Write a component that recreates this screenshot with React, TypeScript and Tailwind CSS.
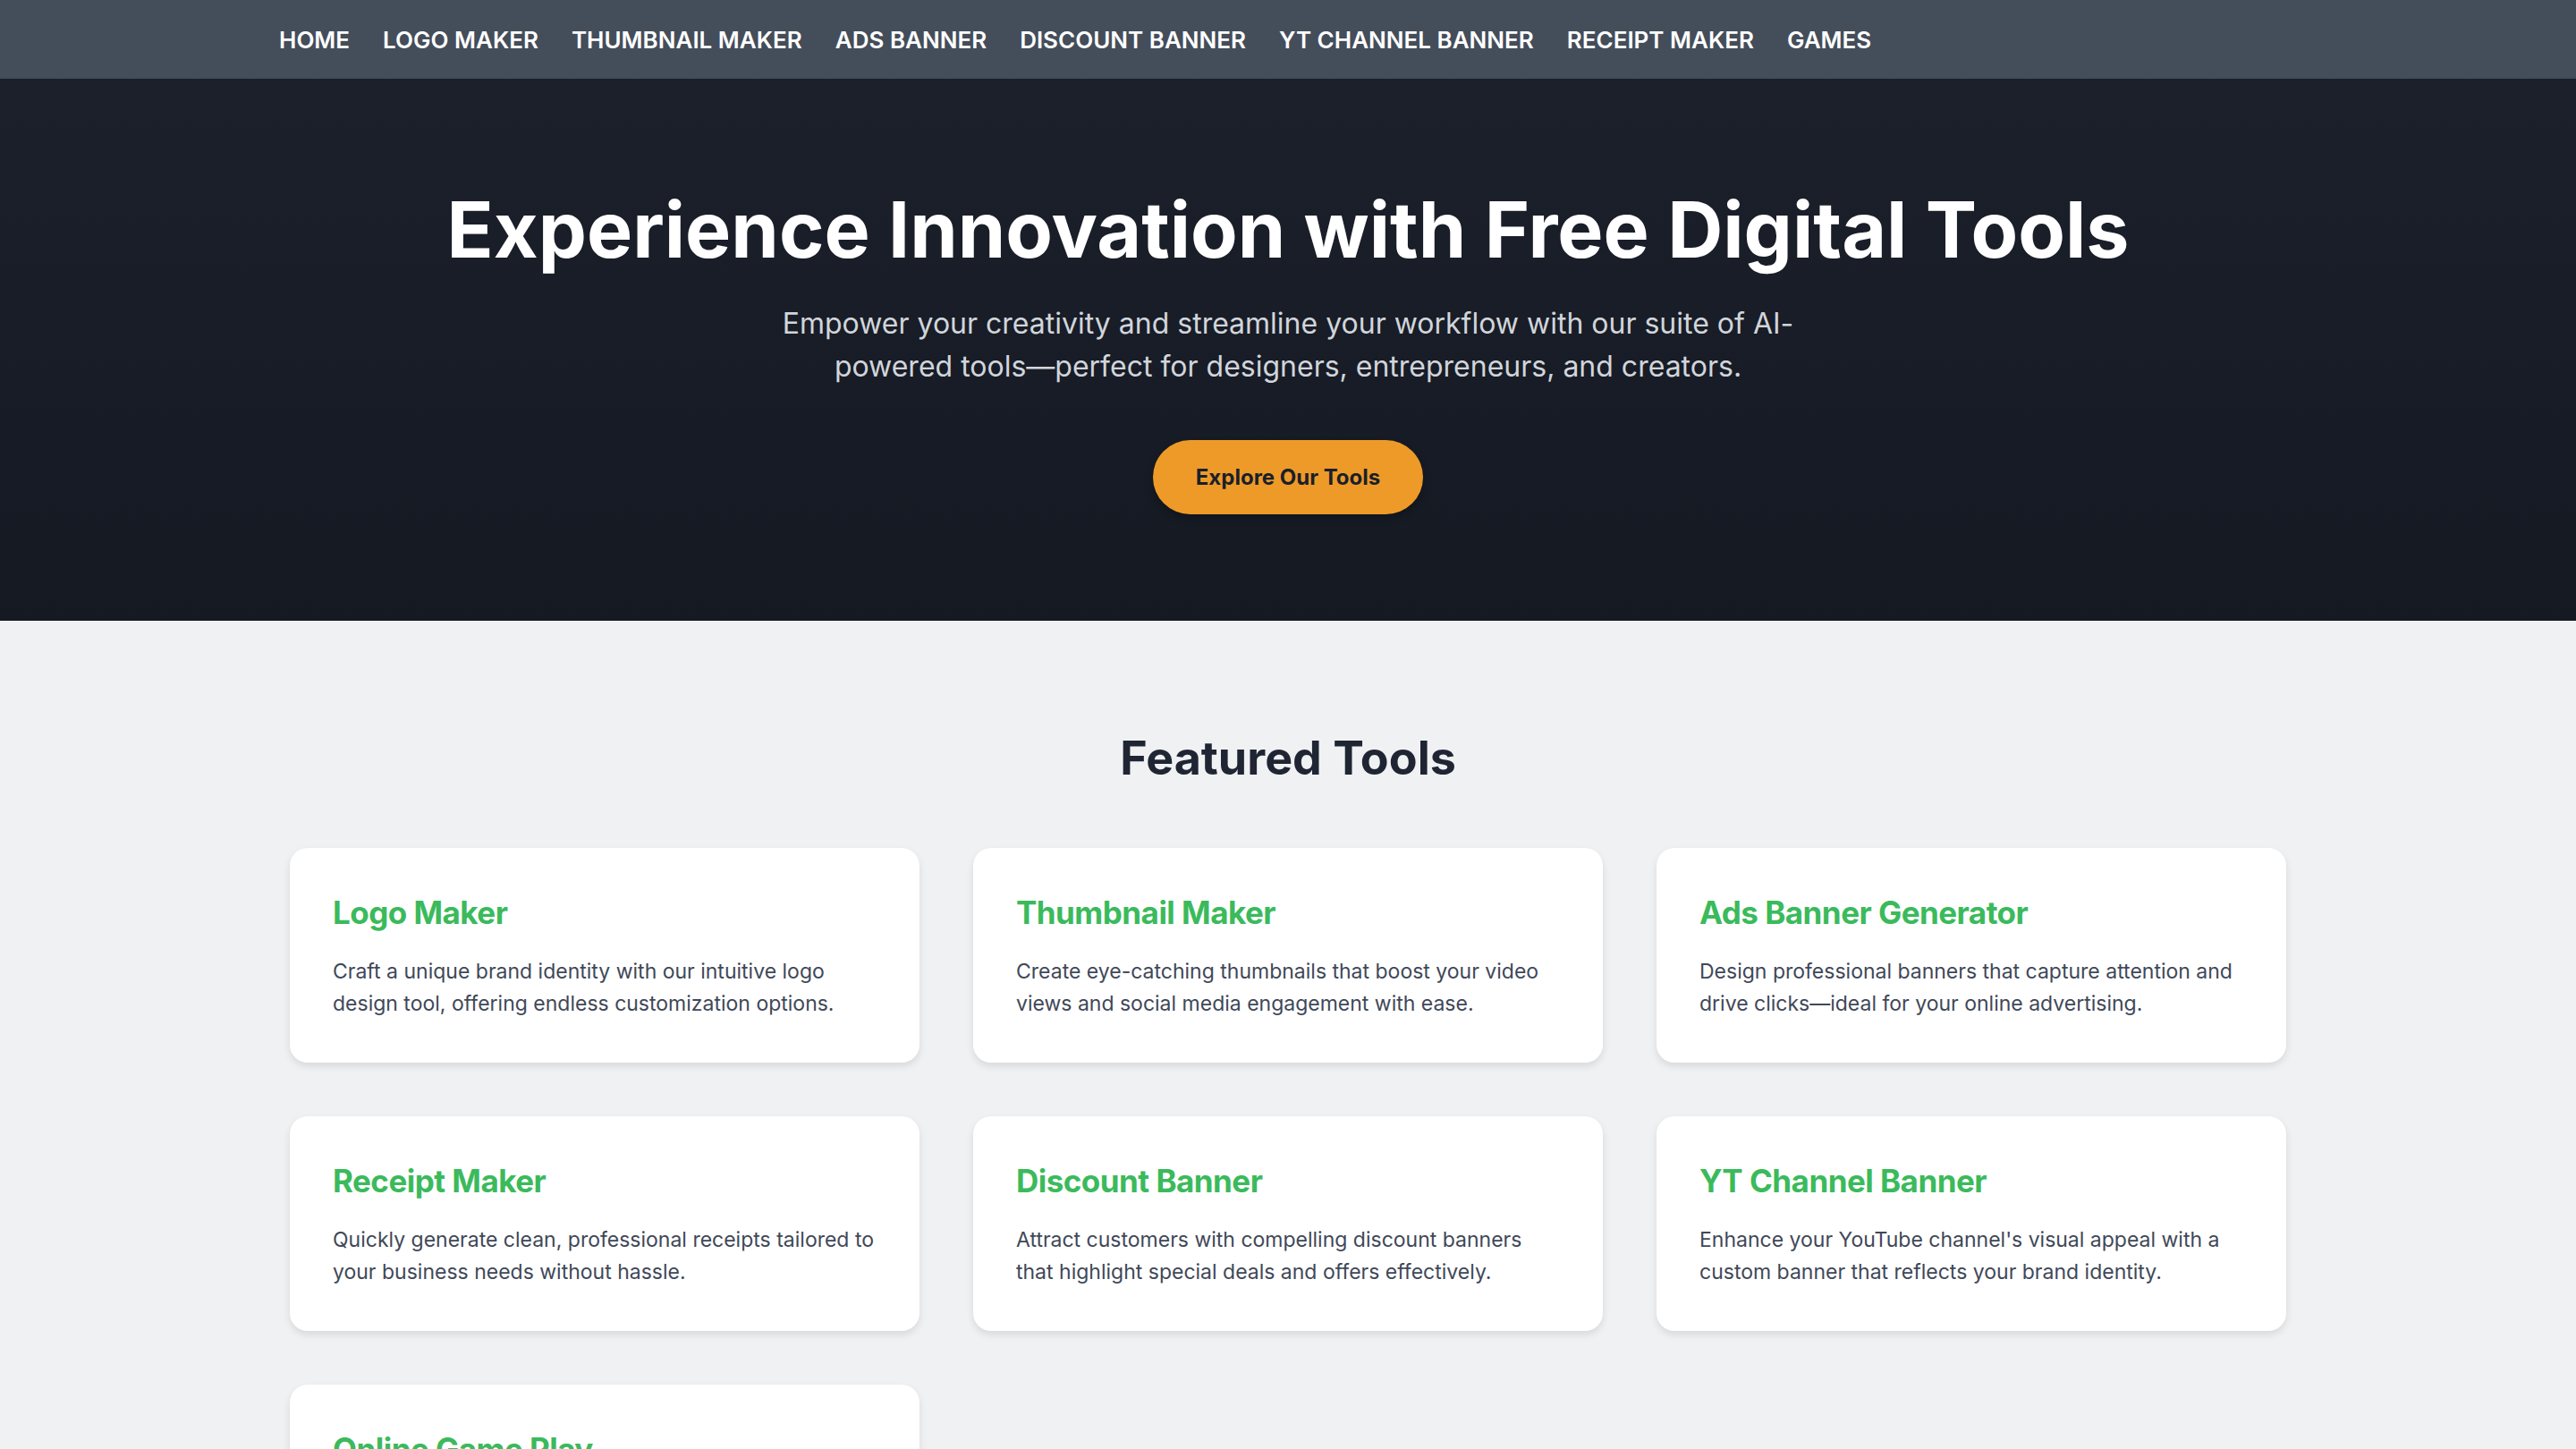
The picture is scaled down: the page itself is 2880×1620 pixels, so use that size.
import React from "react";

const navItems = [
  "HOME",
  "LOGO MAKER",
  "THUMBNAIL MAKER",
  "ADS BANNER",
  "DISCOUNT BANNER",
  "YT CHANNEL BANNER",
  "RECEIPT MAKER",
  "GAMES",
];

const tools = [
  {
    title: "Logo Maker",
    text: "Craft a unique brand identity with our intuitive logo design tool, offering endless customization options.",
  },
  {
    title: "Thumbnail Maker",
    text: "Create eye-catching thumbnails that boost your video views and social media engagement with ease.",
  },
  {
    title: "Ads Banner Generator",
    text: "Design professional banners that capture attention and drive clicks—ideal for your online advertising.",
  },
  {
    title: "Receipt Maker",
    text: "Quickly generate clean, professional receipts tailored to your business needs without hassle.",
  },
  {
    title: "Discount Banner",
    text: "Attract customers with compelling discount banners that highlight special deals and offers effectively.",
  },
  {
    title: "YT Channel Banner",
    text: "Enhance your YouTube channel's visual appeal with a custom banner that reflects your brand identity.",
  },
  {
    title: "Online Game Play",
    text: "Take a break and enjoy a collection of fun, free games right in your browser.",
  },
];

function ToolCard({ title, text }: { title: string; text: string }) {
  return (
    <div className="bg-white rounded-[20px] shadow-[0_4px_8px_rgba(0,0,0,0.1)] px-[48px] pt-[48px] pb-[48px]">
      <h3 className="text-[35px] leading-[48px] font-bold tracking-[-0.015em] text-[#3bba5c]">
        {title}
      </h3>
      <p className="mt-[24px] text-[23px] leading-[36px] text-[#3f4858]">{text}</p>
    </div>
  );
}

export default function App() {
  return (
    <div className="min-h-screen bg-[#f0f1f3] font-['Inter','Liberation_Sans',sans-serif]">
      <nav className="bg-[#444d5a] h-[88px] shadow-[0_2px_4px_rgba(0,0,0,0.15)]">
        <div className="h-full pl-[312px] flex items-center gap-[37px]">
          {navItems.map((item) => (
            <a
              key={item}
              href="#"
              className="text-white text-[26px] font-semibold whitespace-nowrap"
            >
              {item}
            </a>
          ))}
        </div>
      </nav>

      <section className="bg-gradient-to-b from-[#1b202b] to-[#151922] pt-[119px] pb-[119px] text-center">
        <h1 className="text-white text-[86px] leading-[100px] font-bold">
          Experience Innovation with Free Digital Tools
        </h1>
        <p className="mt-[31px] mx-auto max-w-[1180px] text-[32px] leading-[48px] text-[#d1d5db]">
          Empower your creativity and streamline your workflow with our suite of AI-powered
          tools—perfect for designers, entrepreneurs, and creators.
        </p>
        <div className="mt-[58px] flex justify-center">
          <button className="h-[83px] px-[48px] rounded-full bg-[#ee9a28] text-[#1a1f2b] text-[24px] font-bold shadow-[0_4px_10px_rgba(0,0,0,0.25)]">
            Explore Our Tools
          </button>
        </div>
      </section>

      <section className="pt-[124px] pb-[120px]">
        <h2 className="text-center text-[52px] leading-[60px] font-bold text-[#1f2533]">
          Featured Tools
        </h2>
        <div className="mt-[70px] mx-auto w-[2232px] grid grid-cols-3 gap-[60px]">
          {tools.map((t) => (
            <ToolCard key={t.title} title={t.title} text={t.text} />
          ))}
        </div>
      </section>
    </div>
  );
}
